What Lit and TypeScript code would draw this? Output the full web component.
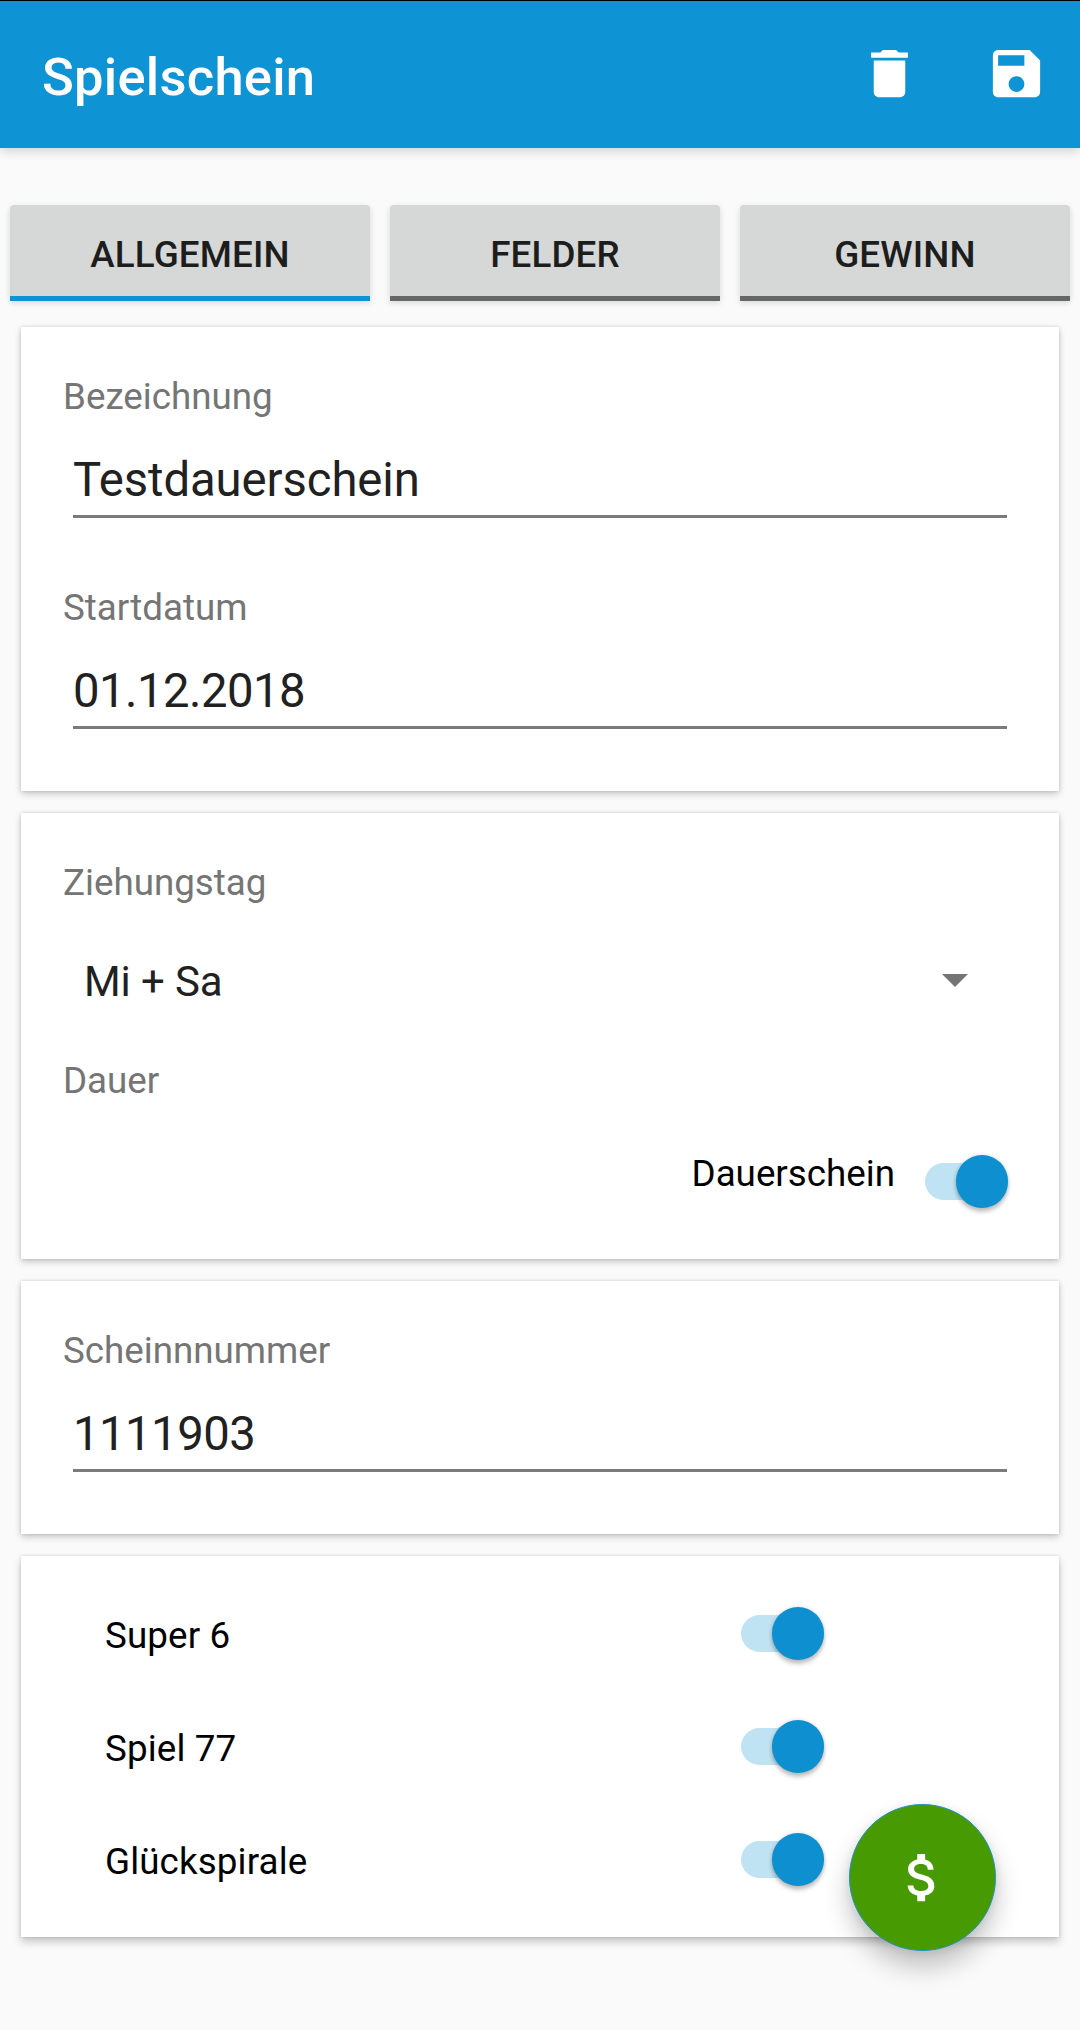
import { LitElement, html, css } from "lit";
import { customElement, property, state } from "lit/decorators.js";
import { classMap } from "lit/directives/class-map.js";

@customElement("toggle-switch")
export class ToggleSwitch extends LitElement {
  @property({ type: Boolean, reflect: true }) checked = false;

  static styles = css`
    :host {
      display: flex;
      align-items: center;
      width: 83px;
      height: 53px;
      flex: none;
      cursor: pointer;
    }
    .track {
      display: flex;
      align-items: center;
      justify-content: flex-start;
      width: 83px;
      height: 37px;
      border-radius: 18.5px;
      background: #c4c4c4;
    }
    .track.on {
      justify-content: flex-end;
      background: #bfe3f2;
    }
    .thumb {
      width: 52.5px;
      height: 52.5px;
      flex: none;
      border-radius: 50%;
      background: #f1f1f1;
      box-shadow: 0 4px 4px rgba(0, 0, 0, 0.22), 0 0 4px rgba(0, 0, 0, 0.14);
    }
    .on .thumb {
      background: #0e90d0;
    }
  `;

  private toggle() {
    this.checked = !this.checked;
  }

  render() {
    return html`<div
      class=${classMap({ track: true, on: this.checked })}
      role="switch"
      aria-checked=${String(this.checked)}
      @click=${this.toggle}
    >
      <div class="thumb"></div>
    </div>`;
  }
}

@customElement("text-field")
export class TextField extends LitElement {
  @property() label = "";
  @property() value = "";
  @property({ type: Boolean }) numeric = false;

  static styles = css`
    :host {
      display: flex;
      flex-direction: column;
    }
    .label {
      font-size: 36.75px;
      line-height: 43px;
      color: #757575;
    }
    .value {
      margin: 34px 10px 0;
      padding-bottom: 7px;
      border-bottom: 3px solid #7b7b7b;
      font-size: 47.25px;
      line-height: 56px;
      letter-spacing: -0.09px;
      color: #212121;
    }
    .value.numeric {
      letter-spacing: -0.52px;
    }
  `;

  render() {
    return html`
      <div class="label">${this.label}</div>
      <div class=${classMap({ value: true, numeric: this.numeric })}>${this.value}</div>
    `;
  }
}

@customElement("app-root")
export class AppRoot extends LitElement {
  @state() private active = 0;

  private tabs = ["ALLGEMEIN", "FELDER", "GEWINN"];
  private games = ["Super 6", "Spiel 77", "Glückspirale"];

  static styles = css`
    :host {
      display: block;
      position: relative;
      width: 1080px;
      height: 2030px;
      overflow: hidden;
      box-sizing: border-box;
      background: #fafafa;
      font-family: Roboto, "Liberation Sans", sans-serif;
      font-size: 36.75px;
      line-height: 43px;
      color: #000;
    }
    .bar {
      display: flex;
      align-items: flex-start;
      box-sizing: border-box;
      height: 148px;
      padding: 41px 32px 0 42px;
      border-top: 1px solid #000;
      background: #0e93d4;
      box-shadow: 0 3px 10px rgba(0, 0, 0, 0.17);
    }
    .title {
      flex: 1;
      margin: 4px 0 0;
      font-size: 52.5px;
      font-weight: 500;
      line-height: 62px;
      letter-spacing: 0.26px;
      color: #fff;
    }
    .icon {
      display: block;
      width: 63px;
      height: 63px;
      fill: #fff;
    }
    .icon + .icon {
      margin-left: 64px;
    }
    .tabs {
      display: grid;
      grid-template-columns: 360px 330px 330px;
      gap: 20px;
      padding: 57px 10px 0;
    }
    .tab {
      box-sizing: border-box;
      height: 96px;
      padding-top: 28px;
      border-radius: 4px 4px 0 0;
      border-bottom: 5px solid #656665;
      background: #d6d8d7;
      box-shadow: 0 2px 6px rgba(0, 0, 0, 0.14);
      text-align: center;
      font-weight: 500;
      letter-spacing: 0.15px;
      color: #1d1d1d;
      cursor: pointer;
    }
    .tab.active {
      border-bottom-color: #0e93d4;
    }
    .cards {
      display: flex;
      flex-direction: column;
      gap: 22px;
      padding: 26px 21px 0;
    }
    .card {
      display: flex;
      flex-direction: column;
      box-sizing: border-box;
      padding: 48px 42px 0;
      background: #fff;
      box-shadow: 0 3px 7px rgba(0, 0, 0, 0.2), 0 0 3px rgba(0, 0, 0, 0.14);
    }
    .general {
      gap: 68px;
      height: 464px;
    }
    .schedule {
      height: 446px;
    }
    .number {
      height: 253px;
    }
    .extras {
      height: 381px;
      gap: 60px;
      padding: 51px 84px 0;
      box-shadow: 0 5px 8px rgba(0, 0, 0, 0.2), 0 0 3px rgba(0, 0, 0, 0.16);
    }
    .label {
      color: #757575;
    }
    .select {
      display: flex;
      align-items: center;
      justify-content: space-between;
      margin: 53px 49.5px 53px 21px;
      font-size: 42px;
      line-height: 49px;
      letter-spacing: -0.12px;
      color: #212121;
    }
    .arrow {
      display: block;
      width: 26px;
      height: 13px;
      margin-bottom: 2px;
      fill: #757575;
    }
    .duration {
      display: flex;
      align-items: flex-start;
      justify-content: flex-end;
      gap: 30px;
      margin: 50px 9px 0 0;
    }
    .duration toggle-switch {
      margin-top: 3px;
    }
    .game {
      display: grid;
      grid-template-columns: 636px 83px;
      letter-spacing: 0.13px;
    }
    .name {
      margin-top: 7px;
    }
    .fab {
      position: absolute;
      left: 849px;
      top: 1804px;
      display: flex;
      align-items: center;
      justify-content: center;
      box-sizing: border-box;
      width: 147px;
      height: 147px;
      border: 1px solid #1c93c0;
      border-radius: 50%;
      background: #479a02;
      box-shadow: 0 16px 26px rgba(0, 0, 0, 0.23), 0 2px 10px rgba(0, 0, 0, 0.08);
      cursor: pointer;
    }
  `;

  render() {
    return html`
      <header class="bar">
        <h1 class="title">Spielschein</h1>
        <svg class="icon" viewBox="0 0 24 24">
          <path
            d="M6 19c0 1.1.9 2 2 2h8c1.1 0 2-.9 2-2V7H6v12zM19 4h-3.5l-1-1h-5l-1 1H5v2h14V4z"
          />
        </svg>
        <svg class="icon" viewBox="0 0 24 24">
          <path
            d="M17 3H5c-1.11 0-2 .9-2 2v14c0 1.1.89 2 2 2h14c1.1 0 2-.9 2-2V7l-4-4zm-5 16c-1.66 0-3-1.34-3-3s1.34-3 3-3 3 1.34 3 3-1.34 3-3 3zm3-10H5V5h10v4z"
          />
        </svg>
      </header>
      <nav class="tabs">
        ${this.tabs.map(
          (name, i) => html`<div
            class=${classMap({ tab: true, active: i === this.active })}
            @click=${() => (this.active = i)}
          >
            ${name}
          </div>`
        )}
      </nav>
      <main class="cards">
        <section class="card general">
          <text-field label="Bezeichnung" value="Testdauerschein"></text-field>
          <text-field label="Startdatum" value="01.12.2018" numeric></text-field>
        </section>
        <section class="card schedule">
          <div class="label">Ziehungstag</div>
          <div class="select">
            <span>Mi + Sa</span>
            <svg class="arrow" viewBox="0 0 26 13"><path d="M0 0h26L13 13z" /></svg>
          </div>
          <div class="label">Dauer</div>
          <div class="duration">
            <span>Dauerschein</span>
            <toggle-switch checked></toggle-switch>
          </div>
        </section>
        <section class="card number">
          <text-field label="Scheinnnummer" value="1111903" numeric></text-field>
        </section>
        <section class="card extras">
          ${this.games.map(
            (name) => html`<div class="game">
              <span class="name">${name}</span>
              <toggle-switch checked></toggle-switch>
            </div>`
          )}
        </section>
      </main>
      <div class="fab" role="button">
        <svg class="icon" viewBox="0 0 24 24">
          <path
            d="M11.8 10.9c-2.27-.59-3-1.2-3-2.15 0-1.09 1.01-1.85 2.7-1.85 1.78 0 2.44.85 2.5 2.1h2.21c-.07-1.72-1.12-3.3-3.21-3.81V3h-3v2.16c-1.94.42-3.5 1.68-3.5 3.61 0 2.31 1.91 3.46 4.7 4.13 2.5.6 3 1.48 3 2.41 0 .69-.49 1.79-2.7 1.79-2.06 0-2.87-.92-2.98-2.1h-2.2c.12 2.19 1.76 3.42 3.68 3.83V21h3v-2.15c1.95-.37 3.5-1.5 3.5-3.55 0-2.84-2.43-3.81-4.7-4.4z"
          />
        </svg>
      </div>
    `;
  }
}
